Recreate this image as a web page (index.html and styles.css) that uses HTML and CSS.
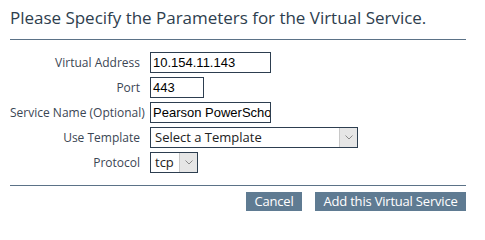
FILE: index.html
```html
<!DOCTYPE html>
<html>
<head>
<meta charset="utf-8">
<link rel="stylesheet" href="styles.css">
</head>
<body>
<div class="page">
  <h1 class="title">Please Specify the Parameters for the Virtual Service.</h1>
  <hr class="rule">
  <div class="form">
    <label class="lbl">Virtual Address</label>
    <div class="field"><span class="input w-addr">10.154.11.143</span></div>
    <label class="lbl">Port</label>
    <div class="field"><span class="input w-port">443</span></div>
    <label class="lbl">Service Name (Optional)</label>
    <div class="field"><span class="input w-addr clip">Pearson PowerSchool</span></div>
    <label class="lbl">Use Template</label>
    <div class="field"><span class="select w-tpl"><span class="sel-text">Select a Template</span><span class="arrow"><svg width="8" height="5" viewBox="0 0 8 5"><path d="M0.5 0.5 L4 4 L7.5 0.5" fill="none" stroke="#8a8a8a" stroke-width="1"/></svg></span></span></div>
    <label class="lbl">Protocol</label>
    <div class="field"><span class="select w-proto"><span class="sel-text">tcp</span><span class="arrow"><svg width="8" height="5" viewBox="0 0 8 5"><path d="M0.5 0.5 L4 4 L7.5 0.5" fill="none" stroke="#8a8a8a" stroke-width="1"/></svg></span></span></div>
  </div>
  <hr class="rule rule2">
  <div class="actions">
    <button class="btn btn-cancel">Cancel</button>
    <button class="btn btn-add">Add this Virtual Service</button>
  </div>
</div>
</body>
</html>
```
FILE: styles.css
```css
html, body { margin: 0; padding: 0; background: #fff; }
body { font-family: "Open Sans", "Noto Sans", sans-serif; }
.page { width: 456px; padding: 0 0 0 10px; }
.title {
  margin: 0;
  padding-top: 8px;
  font-size: 17px;
  font-weight: normal;
  color: #2e3e4e;
  line-height: 20px;
  height: 20px;
  white-space: nowrap;
  letter-spacing: -0.02px;
}
.rule {
  margin: 11px 0 0 0;
  border: 0;
  height: 1px;
  background: #5b7287;
}
.form {
  display: grid;
  grid-template-columns: 130px auto;
  column-gap: 10px;
  row-gap: 4px;
  margin-top: 12px;
  align-items: center;
}
.lbl {
  text-align: right;
  font-size: 12px;
  color: #3b4654;
  white-space: nowrap;
}
.field { display: flex; }
.input, .select {
  box-sizing: border-box;
  height: 21px;
  border: 1px solid #2d3e50;
  font-family: "Liberation Sans", Arial, sans-serif;
  font-size: 13px;
  color: #000;
  line-height: 19px;
  padding-left: 2px;
  white-space: nowrap;
  overflow: hidden;
}
.w-addr { width: 121px; }
.w-port { width: 54px; }
.select { display: flex; padding-left: 0; }
.sel-text { flex: 1; padding-left: 4px; color: #222; font-family: "Open Sans", sans-serif; font-size: 13px; }
.w-tpl { width: 208px; }
.w-proto { width: 48px; }
.arrow {
  width: 17px;
  background: #e6e6e6;
  border-left: 1px solid #c8c8c8;
  display: flex;
  align-items: center;
  justify-content: center;
}
.rule2 { margin-top: 12px; }
.actions {
  display: flex;
  justify-content: flex-end;
  gap: 13px;
  margin-top: 6px;
}
.btn {
  height: 19px;
  border: 0;
  background: #5f7b92;
  color: #fff;
  font-family: "Open Sans", "Noto Sans", sans-serif;
  font-size: 13px;
  padding: 0;
  line-height: 19px;
  letter-spacing: -0.2px;
  text-align: center;
}
.btn-cancel { width: 56px; }
.btn-add { width: 151px; }
```
